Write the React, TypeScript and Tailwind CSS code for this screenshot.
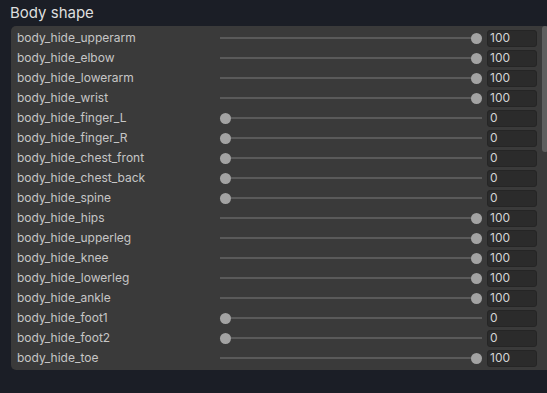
const rows: [string, number][] = [
  ["body_hide_upperarm", 100],
  ["body_hide_elbow", 100],
  ["body_hide_lowerarm", 100],
  ["body_hide_wrist", 100],
  ["body_hide_finger_L", 0],
  ["body_hide_finger_R", 0],
  ["body_hide_chest_front", 0],
  ["body_hide_chest_back", 0],
  ["body_hide_spine", 0],
  ["body_hide_hips", 100],
  ["body_hide_upperleg", 100],
  ["body_hide_knee", 100],
  ["body_hide_lowerleg", 100],
  ["body_hide_ankle", 100],
  ["body_hide_foot1", 0],
  ["body_hide_foot2", 0],
  ["body_hide_toe", 100],
];

function Slider({ value }: { value: number }) {
  return (
    <div className="relative h-[20px] w-[262px] shrink-0">
      <div className="absolute left-0 right-0 top-[9px] h-[2px] bg-[#5a5a5a]" />
      <div
        className="absolute top-[5px] h-[11px] w-[11px] rounded-full bg-[#a3a3a3]"
        style={{ left: `${(value / 100) * 251}px` }}
      />
    </div>
  );
}

export default function App() {
  return (
    <div className="h-[393px] w-[547px] overflow-hidden bg-[#1b1e26] font-['Inter',sans-serif]">
      <div className="pl-[10px] pt-[3px] text-[15px] leading-[20px] text-[#dedede]">Body shape</div>
      <div className="ml-[11px] mt-[3px] flex h-[344px] w-[545px] overflow-hidden rounded-[5px] bg-[#3a3a3a]">
        <div className="flex flex-col pl-[6px] pt-[2px]">
          {rows.map(([label, value]) => (
            <div key={label} className="flex h-[20px] shrink-0 items-center">
              <div className="w-[203px] shrink-0 text-[12px] text-[#c6c6c6]">{label}</div>
              <Slider value={value} />
              <div className="ml-[5px] flex h-[17px] w-[50px] shrink-0 items-center rounded-[3px] border border-[#252525] bg-[#2b2b2b] pl-[2px] text-[12px] text-[#d4d4d4]">
                {value}
              </div>
            </div>
          ))}
          <div className="flex h-[20px] shrink-0 items-center">
            <div className="ml-[470px] h-[17px] w-[50px] shrink-0 rounded-[3px] border border-[#252525] bg-[#2b2b2b]" />
          </div>
        </div>
        <div className="ml-[5px] h-[126px] w-[6px] shrink-0 rounded-[3px] bg-[#5e5e5e]" />
      </div>
    </div>
  );
}
